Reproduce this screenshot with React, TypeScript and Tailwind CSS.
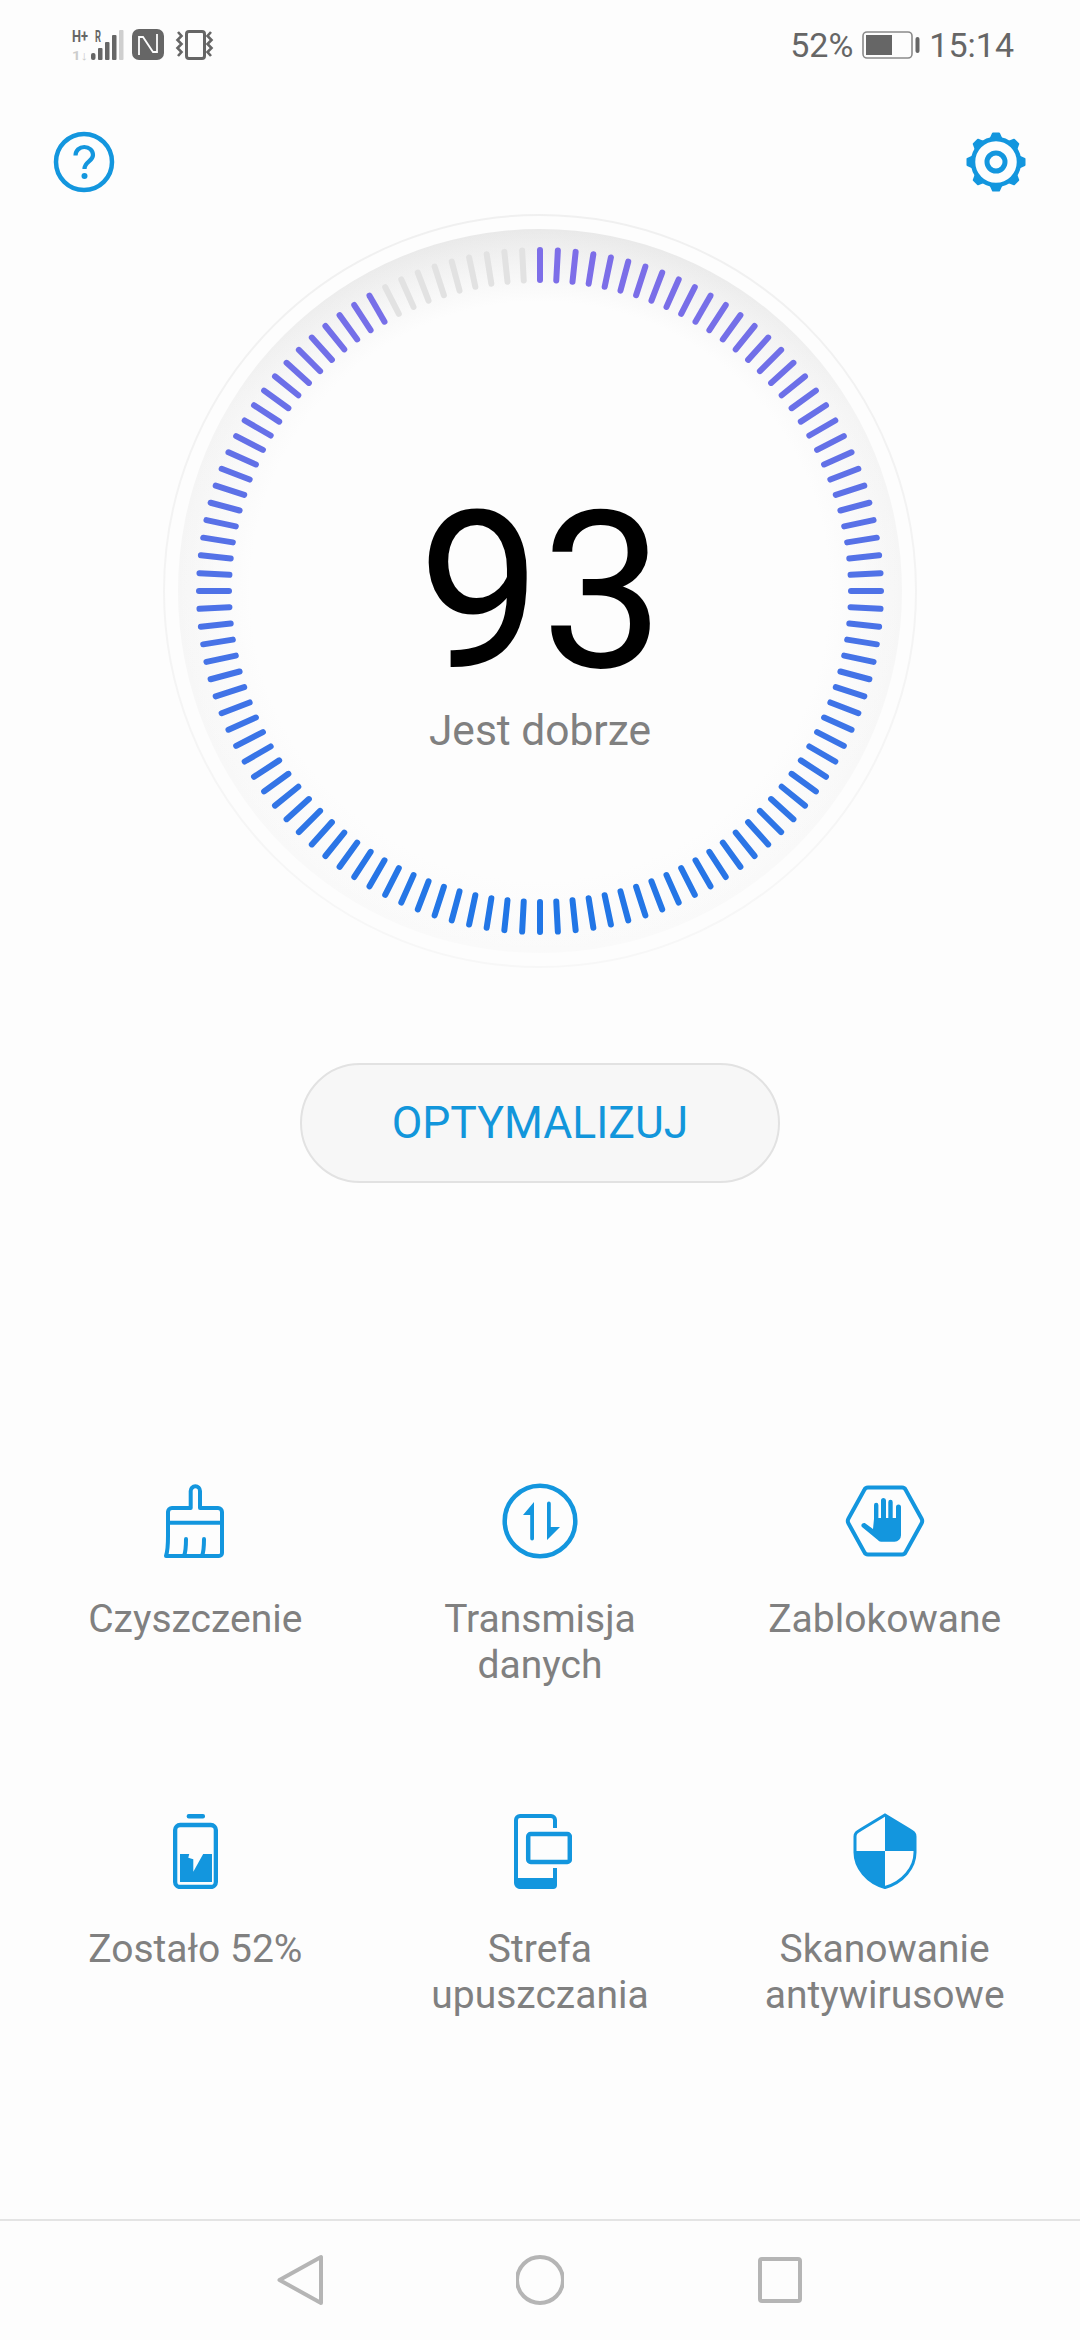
const BLUE = "#1396de";

// 120 ticks, one every 3 degrees, the last 9 stay grey for a score of 93
function Gauge() {
  const cx = 380;
  const cy = 380;
  const ticks = Array.from({ length: 120 }, (_, i) => {
    const a = (i * 3 * Math.PI) / 180;
    const sin = Math.sin(a);
    const cos = Math.cos(a);
    const t = (1 - cos) / 2;
    const r = Math.round(125 - 92 * t);
    const g = Math.round(110 + 8 * t);
    const b = Math.round(232 - 2 * t);
    const color = i >= 111 ? "#e2e2e2" : `rgb(${r},${g},${b})`;
    return (
      <line
        key={i}
        x1={cx + 311 * sin}
        y1={cy - 311 * cos}
        x2={cx + 341 * sin}
        y2={cy - 341 * cos}
        stroke={color}
        strokeWidth={6}
        strokeLinecap="round"
      />
    );
  });

  return (
    <svg width={760} height={760} viewBox="0 0 760 760" className="absolute left-0 top-0">
      <defs>
        <linearGradient id="band" x1="0" y1="0" x2="0" y2="1">
          <stop offset="0" stopColor="#e9e9e9" />
          <stop offset="0.25" stopColor="#f4f4f4" />
          <stop offset="1" stopColor="#fafafa" />
        </linearGradient>
        <linearGradient id="rim" x1="0" y1="0" x2="0" y2="1">
          <stop offset="0" stopColor="#f0f0f0" />
          <stop offset="1" stopColor="#f7f7f7" />
        </linearGradient>
        <radialGradient id="fade" gradientUnits="userSpaceOnUse" cx={cx} cy={cy} r={362}>
          <stop offset="0.8" stopColor="#fdfdfd" stopOpacity="1" />
          <stop offset="1" stopColor="#fdfdfd" stopOpacity="0" />
        </radialGradient>
      </defs>
      <circle cx={cx} cy={cy} r={376} fill="none" stroke="url(#rim)" strokeWidth={2} />
      <circle cx={cx} cy={cy} r={362} fill="url(#band)" />
      <circle cx={cx} cy={cy} r={362} fill="url(#fade)" />
      {ticks}
    </svg>
  );
}

function SignalIcons() {
  return (
    <svg width={150} height={36} viewBox="0 0 150 36" className="block">
      <text x="0" y="15" fontFamily="Roboto" fontWeight="700" fontSize="17" fill="#666" textLength="16" lengthAdjust="spacingAndGlyphs">H+</text>
      <text x="23" y="15" fontFamily="Roboto" fontWeight="700" fontSize="17" fill="#666" textLength="6" lengthAdjust="spacingAndGlyphs">R</text>
      <text x="0" y="33" fontFamily="Roboto" fontWeight="700" fontSize="13" fill="#ccc" textLength="16" lengthAdjust="spacingAndGlyphs">1↓</text>
      <rect x="19" y="26" width="4.5" height="7" rx="2" fill="#666" />
      <rect x="26" y="21" width="4.5" height="12" rx="1" fill="#666" />
      <rect x="33" y="15" width="4.5" height="18" rx="1" fill="#666" />
      <rect x="40" y="8" width="4.5" height="25" rx="1" fill="#666" />
      <rect x="47" y="3" width="4.5" height="30" rx="1" fill="#cfcfcf" />
      <rect x="60" y="2" width="32" height="31" rx="7" fill="#666" />
      <path d="M67 28V10h4l10 15M85 7v18h-4L71 10" fill="none" stroke="#fdfdfd" strokeWidth="1.800" />
      <rect x="114.500" y="4.500" width="18" height="27" rx="2.500" fill="none" stroke="#666" strokeWidth="3" />
      <path d="M106 5l3.500 4-4 4 4 4-4 4 4 4-3.500 4M139 5l-3.500 4 4 4-4 4 4 4-4 4 3.500 4" fill="none" stroke="#666" strokeWidth="2.600" />
    </svg>
  );
}

function BatteryIcon() {
  return (
    <svg width={58} height={28} viewBox="0 0 58 28" className="block">
      <rect x="1" y="1" width="49" height="26" rx="4" fill="none" stroke="#8a8a8a" strokeWidth="1.600" />
      <rect x="4" y="4" width="26" height="20" fill="#666" />
      <rect x="53.500" y="6" width="4" height="16" rx="2" fill="#666" />
    </svg>
  );
}

function HelpIcon() {
  return (
    <svg width={62} height={62} viewBox="0 0 62 62" className="block">
      <circle cx="31" cy="31" r="28" fill="none" stroke={BLUE} strokeWidth="4.500" />
      <path d="M22.500 24.500c0-5 4-8.500 8.800-8.500s8.700 3.300 8.700 8c0 6.500-8.500 6.500-8.500 14" fill="none" stroke={BLUE} strokeWidth="4.200" />
      <circle cx="31.500" cy="45" r="3" fill={BLUE} />
    </svg>
  );
}

function GearIcon() {
  const teeth = [0, 45, 90, 135, 180, 225, 270, 315];
  return (
    <svg width={62} height={62} viewBox="0 0 62 62" className="block">
      {teeth.map((a) => (
        <path
          key={a}
          d="M25.500 8 L28 2.500 H34 L36.500 8 Z"
          fill={BLUE}
          stroke={BLUE}
          strokeWidth="2"
          strokeLinejoin="round"
          transform={`rotate(${a} 31 31)`}
        />
      ))}
      <circle cx="31" cy="31" r="23" fill="none" stroke={BLUE} strokeWidth="4.500" />
      <circle cx="31" cy="31" r="9" fill="none" stroke={BLUE} strokeWidth="5" />
    </svg>
  );
}

function BrushIcon() {
  return (
    <svg width={62} height={75} viewBox="0 0 62 75" className="block" fill="none" stroke={BLUE} strokeWidth="4" strokeLinejoin="round">
      <path d="M26.700 24V7a4.650 4.650 0 0 1 9.300 0V24H54a4 4 0 0 1 4 4V69a3 3 0 0 1-3 3H2C4 66 4 60 4 52V28a4 4 0 0 1 4-4Z" />
      <path d="M4 38.700H58" />
      <path d="M22 55c0 6 0 12-2 17M40 55c0 6 0 12-2 17" strokeLinecap="round" />
    </svg>
  );
}

function DataIcon() {
  return (
    <svg width={76} height={76} viewBox="0 0 76 76" className="block">
      <circle cx="38" cy="38" r="35.300" fill="none" stroke={BLUE} strokeWidth="4.500" />
      <path d="M32 19V55.500a1.900 1.900 0 0 1-3.800 0V32H21z" fill={BLUE} />
      <path d="M45 57V20.500a1.900 1.900 0 0 1 3.800 0V44H58z" fill={BLUE} />
    </svg>
  );
}

function BlockedIcon() {
  return (
    <svg width={80} height={72} viewBox="0 0 80 72" className="block">
      <path d="M23 2.500h34a4 4 0 0 1 3.700 2.500L76.500 33.500a5 5 0 0 1 0 5L60.700 67a4 4 0 0 1-3.700 2.500H23a4 4 0 0 1-3.700-2.500L3.500 38.500a5 5 0 0 1 0-5L19.300 5a4 4 0 0 1 3.700-2.500z" fill="none" stroke={BLUE} strokeWidth="4" />
      <path d="M29 34V20a2.200 2.200 0 0 1 4.400 0V33H36V15.500a2.500 2.500 0 0 1 5 0V33h2.300V17a2.200 2.200 0 0 1 4.400 0V33H51V22a2.500 2.500 0 0 1 5 0V50a6.500 6.500 0 0 1-6.500 6.700H36a4 4 0 0 1-3.200-1.800L17 42c-2-2 1-5 3.500-3.500L28 44z" fill={BLUE} />
    </svg>
  );
}

function ChargeIcon() {
  return (
    <svg width={45} height={75} viewBox="0 0 45 75" className="block">
      <rect x="13.700" y="0" width="18.300" height="4.500" rx="2" fill={BLUE} />
      <rect x="2.150" y="11" width="40.700" height="62" rx="5" fill="none" stroke={BLUE} strokeWidth="4.300" />
      <path d="M7 40h32v28H7z" fill={BLUE} />
      <path d="M16.300 39.700H30.300L20.300 57.700V45.300L15.300 43.700z" fill="#fdfdfd" />
    </svg>
  );
}

function DropZoneIcon() {
  return (
    <svg width={58} height={75} viewBox="0 0 58 75" className="ml-[6px] block">
      <path d="M41 14V6a4 4 0 0 0-4-4H6a4 4 0 0 0-4 4v63a4 4 0 0 0 4 4h31a4 4 0 0 0 4-4V54" fill="none" stroke={BLUE} strokeWidth="4" />
      <path d="M2 64h41v7a4 4 0 0 1-4 4H6a6 6 0 0 1-4-4z" fill={BLUE} />
      <rect x="14.200" y="20" width="41.600" height="28" rx="2.500" fill="none" stroke={BLUE} strokeWidth="4.500" />
    </svg>
  );
}

function ShieldIcon() {
  return (
    <svg width={64} height={76} viewBox="0 0 64 76" className="block">
      <path d="M32 2 L56 16.500c4 2.500 6 3.500 6 7v16c0 15-12 30-30 35C14 69.500 2 54.500 2 39.500v-16c0-3.500 2-4.500 6-7z" fill="#fdfdfd" stroke={BLUE} strokeWidth="3" />
      <path d="M32 1 L56 16.500c4 2.500 6 3.500 6 7V38H32zM32 38v36.500C14 69.500 2 54.500 2 39.500V38z" fill={BLUE} />
    </svg>
  );
}

function Tile({ icon, label }: { icon: React.ReactNode; label: React.ReactNode }) {
  return (
    <div className="flex flex-col items-center">
      <div className="flex h-[76px] items-center justify-center">{icon}</div>
      <div className="mt-[37px] whitespace-nowrap text-center text-[39px] leading-[46px] text-[#808080]">{label}</div>
    </div>
  );
}

export default function App() {
  return (
    <div className="flex h-[2340px] w-[1080px] flex-col overflow-hidden bg-[#fdfdfd] font-['Roboto',sans-serif]">
      {/* status bar */}
      <div className="flex h-[90px] items-center justify-between pl-[72px] pr-[66px]">
        <SignalIcons />
        <div className="flex items-center gap-[9px] text-[34px] leading-none text-[#666]">
          <span>52%</span>
          <BatteryIcon />
          <span>15:14</span>
        </div>
      </div>

      <div className="mt-[41px] flex h-[62px] items-center justify-between px-[53px]">
        <HelpIcon />
        <GearIcon />
      </div>

      {/* score */}
      <div className="relative mx-auto mt-[18px] flex h-[760px] w-[760px] flex-col items-center">
        <Gauge />
        <div className="relative ml-[2px] mt-[296px] text-[219px] leading-[170px] text-black">93</div>
        <div className="relative mt-[29px] text-[42.500px] leading-[50px] text-[#808080]">Jest dobrze</div>
      </div>

      <button className="mx-auto mt-[92px] h-[120px] w-[480px] rounded-full border-2 border-[#e2e2e2] bg-[#f7f7f7] text-[44.500px] text-[#1296db]">
        OPTYMALIZUJ
      </button>

      <div className="mt-[300px] grid grid-cols-3 grid-rows-[330px_330px] px-[23px]">
        <Tile icon={<BrushIcon />} label="Czyszczenie" />
        <Tile icon={<DataIcon />} label={<>Transmisja<br />danych</>} />
        <Tile icon={<BlockedIcon />} label="Zablokowane" />
        <Tile icon={<ChargeIcon />} label="Zostało 52%" />
        <Tile icon={<DropZoneIcon />} label={<>Strefa<br />upuszczania</>} />
        <Tile icon={<ShieldIcon />} label={<>Skanowanie<br />antywirusowe</>} />
      </div>

      {/* nav bar */}
      <div className="mt-auto flex h-[121px] items-center justify-center gap-[192px] border-t-2 border-[#e4e4e4] pb-[2px]">
        <svg width={48} height={52} viewBox="0 0 48 52" className="block">
          <path d="M45 3 V49 L3.500 26 Z" fill="none" stroke="#b5b5b5" strokeWidth="4" strokeLinejoin="round" />
        </svg>
        <svg width={48} height={52} viewBox="0 0 48 52" className="block">
          <circle cx="24" cy="26" r="23" fill="none" stroke="#b5b5b5" strokeWidth="4" />
        </svg>
        <svg width={48} height={52} viewBox="0 0 48 52" className="block">
          <rect x="4" y="5" width="40" height="42" rx="2" fill="none" stroke="#b5b5b5" strokeWidth="4" />
        </svg>
      </div>
    </div>
  );
}
